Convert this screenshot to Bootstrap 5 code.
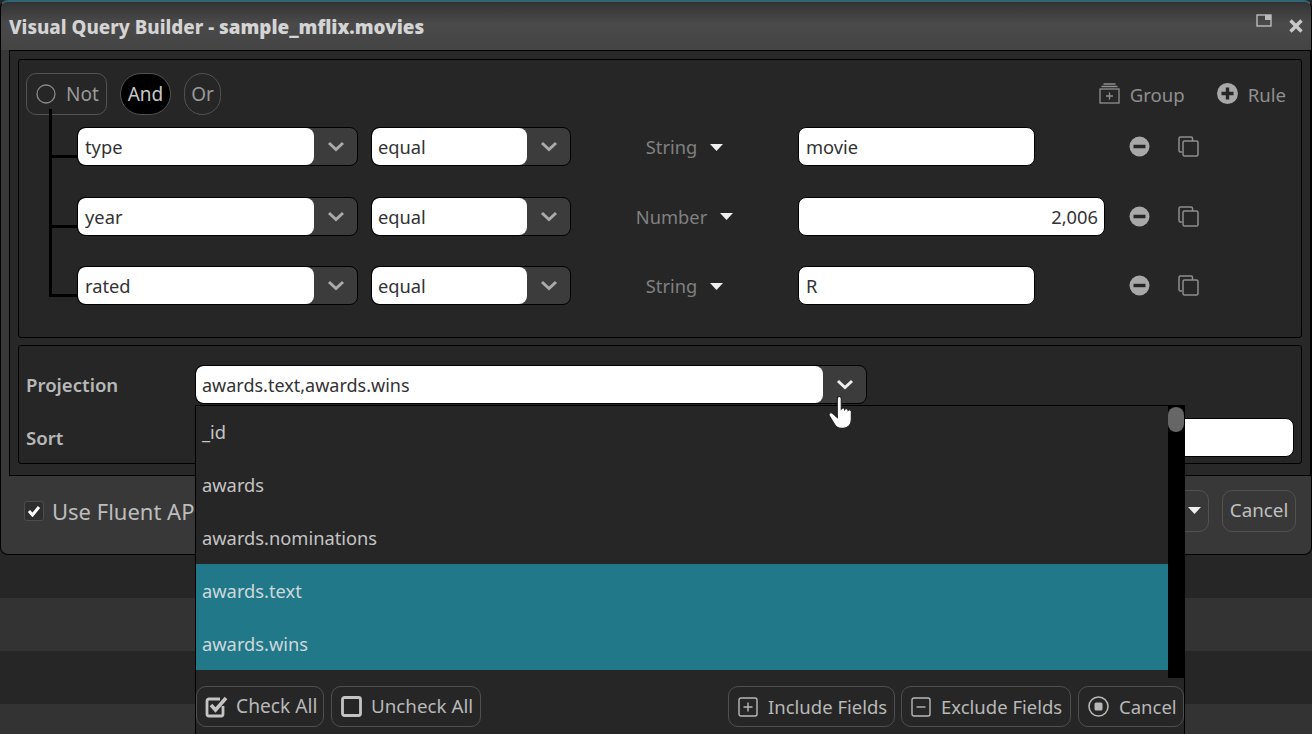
<!DOCTYPE html>
<html lang="en">
<head>
<meta charset="UTF-8">
<title>Visual Query Builder</title>
<link rel="stylesheet" href="https://cdn.jsdelivr.net/npm/bootstrap@5.3.0/dist/css/bootstrap.min.css">
<style>
html,body{height:734px;overflow:hidden}
body{background:#262626;font-family:"Noto Sans","Open Sans",sans-serif;font-size:18.3px;color:#c8c8c8;position:relative}
.stage{height:734px;overflow:hidden;position:relative}
.bgstripe{height:53px}
.bgstripe.odd{background:#333}
.bgstripe.first{height:43px}
.dlg{height:555px;background:#383838;border:1px solid #000;border-top:2px solid #2f6472;border-radius:8px;display:flex;flex-direction:column;overflow:hidden}
.dlg-head{height:48px;flex:none;padding:0 0 0 8px;background:linear-gradient(#333,#4a4a4a 45%,#444);color:#d4d4d4}
.dlg-title{font-weight:800;font-size:18.8px;margin-top:2px}
.dlg-title b{font-weight:900;font-size:18.85px}
.dlg-tools{padding-right:7px;margin-top:-5px}
.outerbox{height:426px;flex:none;margin-left:8px;border:1px solid #000;background:#282828;padding:8px 8px 9px 8px}
.panel{border:1px solid #000;border-radius:3px;background:#262626}
.panel-rules{height:279px;padding:13px 8px 13px 7px;position:relative}
.panel-proj{height:119px;margin-top:7px;padding:19px 7px 0 7px}
.btn-pill{height:42px;border:1px solid #525252;color:#9a9a9a;display:flex;align-items:center;font-size:19px;background:transparent}
.b-not{width:81px;border-radius:10px;padding-left:9px;gap:10px}
.b-and{width:51px;border-radius:21px;justify-content:center;background:#000;color:#c8c8c8;margin-left:13px}
.b-or{width:37px;border-radius:21px;justify-content:center;margin-left:13px}
.headact{color:#8f8f8f;font-size:18.6px;gap:10px;display:flex;align-items:center;margin-right:7px}
.headact span{padding-top:2px}
.headact-rule{margin-left:22px}
.rulerow{height:39px;display:flex;align-items:center;margin-left:51px;position:relative}
.rulerow+.rulerow{margin-top:30.5px}
.firstrow{margin-top:12px}
.rulerow::before{content:"";position:absolute;left:-26px;top:28px;width:26px;height:3px;background:#000}
.vline{position:absolute;left:30px;top:49px;bottom:40px;width:3px;background:#000}
.combo{height:39px;border:1px solid #000;border-radius:8px;background:#3c3c3c;display:flex;overflow:hidden;flex:none}
.combo-txt{background:#fff;color:#333;border-radius:8px;display:flex;align-items:center;padding:1px 0 0 6px;flex:1}
.combo-arr{width:43px;display:flex;align-items:center;justify-content:center;flex:none}
.c-field{width:281px}
.c-field .combo-txt{padding-left:7px}
.c-op{width:200px;margin-left:13px}
.typecol{width:227px;flex:none;display:flex;align-items:center;justify-content:center;gap:13px;color:#808080;padding-top:1px}
.valbox{height:39px;border:1px solid #000;border-radius:8px;background:#fff;color:#333;display:flex;align-items:center;padding:1px 6px 0 7px;flex:none}
.v-str{width:237px;margin-right:94px}
.v-num{width:307px;margin-right:24px;justify-content:flex-end}
.rowicons{display:flex;align-items:center;gap:28px}
.projrow{display:flex;align-items:center;height:39px}
.projlabel{width:169px;flex:none;font-weight:600;color:#b8b8b8;font-size:18.6px}
.c-proj{width:672px}
.c-proj .combo-txt{font-size:18px}
.sortrow{margin-top:14px}
.sortbox{flex:1;height:39px;background:#fff;border:1px solid #000;border-radius:8px}
.dlg-foot{flex:1;display:flex;align-items:center;padding:0 15px 9px 23px;justify-content:space-between}
.chk{width:20px;height:20px;border:1px solid #4d4d4d;border-radius:3px;background:#2e2e2e;display:flex;align-items:center;justify-content:center}
.fluent{font-size:22px;color:#bdbdbd;margin-left:8px;padding-top:2px}
.footbtn{height:42px;border:1px solid #525252;border-radius:10px;display:flex;align-items:center;justify-content:center;font-size:18.8px;color:#c0c0c0}
.f-drop{width:60px;padding-left:30px}
.f-cancel{width:74px;margin-left:13px}
.popup{position:absolute;left:195px;top:405px;width:990px;height:340px;background:#262626;border-left:1px solid #000;border-top:1px solid #000;border-right:1px solid #000;z-index:5}
.plist{height:273px;position:relative;padding-right:16px;margin-top:-1px}
.pitem{height:53px;display:flex;align-items:center;padding:1px 0 0 6px;color:#c4c4c4}
.pitem.sel{background:#207889;color:#cfd8da}
.psb{position:absolute;right:0;top:1px;bottom:0;width:16px;background:#000}
.psb-thumb{height:25px;margin-top:1px;background:#666;border-radius:8px}
.pfoot{display:flex;margin-top:8px}
.pbtn{height:41px;border:1px solid #4f4f4f;border-radius:10px;display:flex;align-items:center;gap:10px;color:#b8b8b8;padding:0 0 0 9px;white-space:nowrap;flex:none;font-size:18.5px}
.pb-check{width:128px;padding-left:8px;gap:8px;font-size:19.2px}
.pb-uncheck{width:150px;margin-left:7px;gap:9px;font-size:18.8px}
.pb-incl{width:167px;margin-left:auto}
.pb-excl{width:170px;margin-left:6px}
.pb-cancel{width:106px;margin-left:7px}
.hand{position:absolute;left:827px;top:395px;z-index:6}
</style>
</head>
<body>
<div class="stage">
  <div class="dlg">
    <div class="dlg-head d-flex justify-content-between align-items-center">
      <div class="dlg-title">Visual Query Builder - <b>sample_mflix.movies</b></div>
      <div class="dlg-tools d-flex align-items-start gap-3">
        <svg width="16" height="14" viewBox="0 0 16 14"><rect x="1" y="1" width="14" height="11" fill="none" stroke="#bbb" stroke-width="1.4"/><rect x="9" y="1" width="6" height="5" fill="#bbb"/></svg>
        <svg class="mt-1" width="16" height="16" viewBox="0 0 16 16"><path d="M2.5 2.5L13.5 13.5M13.5 2.5L2.5 13.5" stroke="#c8c8c8" stroke-width="3.4"/></svg>
      </div>
    </div>
    <div class="outerbox">
      <div class="panel panel-rules">
        <div class="vline"></div>
        <div class="d-flex align-items-center">
          <div class="btn-pill b-not">
            <svg width="20" height="20" viewBox="0 0 20 20"><circle cx="10" cy="10" r="9" fill="none" stroke="#8a8a8a" stroke-width="1.3"/></svg>
            <span>Not</span>
          </div>
          <div class="btn-pill b-and">And</div>
          <div class="btn-pill b-or">Or</div>
          <div class="headact ms-auto">
            <svg width="21" height="21" viewBox="0 0 21 21" fill="none" stroke="#8f8f8f" stroke-width="1.3"><path d="M4.5 1h12M2.5 3.5h16"/><rect x="1" y="6" width="19" height="14"/><path d="M10.5 9.5v7M7 13h7"/></svg>
            <span>Group</span>
            <svg class="headact-rule" width="21" height="21" viewBox="0 0 21 21"><circle cx="10.500" cy="10.500" r="10.500" fill="#a8a8a8"/><path d="M10.500 4.500v12M4.500 10.500h12" stroke="#262626" stroke-width="3.400"/></svg>
            <span>Rule</span>
          </div>
        </div>
        <div class="rulerow firstrow">
          <div class="combo c-field"><div class="combo-txt">type</div><div class="combo-arr"><svg width="18" height="11" viewBox="0 0 18 11"><path d="M2 2l7 6.500L16 2" fill="none" stroke="#aaa" stroke-width="3"/></svg></div></div>
          <div class="combo c-op"><div class="combo-txt">equal</div><div class="combo-arr"><svg width="18" height="11" viewBox="0 0 18 11"><path d="M2 2l7 6.500L16 2" fill="none" stroke="#aaa" stroke-width="3"/></svg></div></div>
          <div class="typecol"><span>String</span><svg width="13" height="7" viewBox="0 0 13 7"><path d="M0 0h13L6.500 7z" fill="#f0f0f0"/></svg></div>
          <div class="valbox v-str">movie</div>
          <div class="rowicons">
            <svg width="21" height="21" viewBox="0 0 21 21"><circle cx="10.500" cy="10.500" r="10" fill="#a8a8a8"/><path d="M4.500 10.500h12" stroke="#262626" stroke-width="3.400"/></svg>
            <svg width="21" height="21" viewBox="0 0 21 21" fill="none" stroke="#8f8f8f" stroke-width="1.500"><path d="M4 16H2.500a1.500 1.500 0 0 1-1.500-1.500V2.500A1.500 1.500 0 0 1 2.500 1H13a1.500 1.500 0 0 1 1.500 1.500V5"/><rect x="5" y="5" width="15" height="15" rx="1.500"/></svg>
          </div>
        </div>
        <div class="rulerow">
          <div class="combo c-field"><div class="combo-txt">year</div><div class="combo-arr"><svg width="18" height="11" viewBox="0 0 18 11"><path d="M2 2l7 6.500L16 2" fill="none" stroke="#aaa" stroke-width="3"/></svg></div></div>
          <div class="combo c-op"><div class="combo-txt">equal</div><div class="combo-arr"><svg width="18" height="11" viewBox="0 0 18 11"><path d="M2 2l7 6.500L16 2" fill="none" stroke="#aaa" stroke-width="3"/></svg></div></div>
          <div class="typecol"><span>Number</span><svg width="13" height="7" viewBox="0 0 13 7"><path d="M0 0h13L6.500 7z" fill="#f0f0f0"/></svg></div>
          <div class="valbox v-num">2,006</div>
          <div class="rowicons">
            <svg width="21" height="21" viewBox="0 0 21 21"><circle cx="10.500" cy="10.500" r="10" fill="#a8a8a8"/><path d="M4.500 10.500h12" stroke="#262626" stroke-width="3.400"/></svg>
            <svg width="21" height="21" viewBox="0 0 21 21" fill="none" stroke="#8f8f8f" stroke-width="1.500"><path d="M4 16H2.500a1.500 1.500 0 0 1-1.500-1.500V2.500A1.500 1.500 0 0 1 2.500 1H13a1.500 1.500 0 0 1 1.500 1.500V5"/><rect x="5" y="5" width="15" height="15" rx="1.500"/></svg>
          </div>
        </div>
        <div class="rulerow">
          <div class="combo c-field"><div class="combo-txt">rated</div><div class="combo-arr"><svg width="18" height="11" viewBox="0 0 18 11"><path d="M2 2l7 6.500L16 2" fill="none" stroke="#aaa" stroke-width="3"/></svg></div></div>
          <div class="combo c-op"><div class="combo-txt">equal</div><div class="combo-arr"><svg width="18" height="11" viewBox="0 0 18 11"><path d="M2 2l7 6.500L16 2" fill="none" stroke="#aaa" stroke-width="3"/></svg></div></div>
          <div class="typecol"><span>String</span><svg width="13" height="7" viewBox="0 0 13 7"><path d="M0 0h13L6.500 7z" fill="#f0f0f0"/></svg></div>
          <div class="valbox v-str">R</div>
          <div class="rowicons">
            <svg width="21" height="21" viewBox="0 0 21 21"><circle cx="10.500" cy="10.500" r="10" fill="#a8a8a8"/><path d="M4.500 10.500h12" stroke="#262626" stroke-width="3.400"/></svg>
            <svg width="21" height="21" viewBox="0 0 21 21" fill="none" stroke="#8f8f8f" stroke-width="1.500"><path d="M4 16H2.500a1.500 1.500 0 0 1-1.500-1.500V2.500A1.500 1.500 0 0 1 2.500 1H13a1.500 1.500 0 0 1 1.500 1.500V5"/><rect x="5" y="5" width="15" height="15" rx="1.500"/></svg>
          </div>
        </div>
      </div>
      <div class="panel panel-proj">
        <div class="projrow">
          <div class="projlabel">Projection</div>
          <div class="combo c-proj"><div class="combo-txt">awards.text,awards.wins</div><div class="combo-arr"><svg width="18" height="11" viewBox="0 0 18 11"><path d="M2 2l7 6.500L16 2" fill="none" stroke="#eee" stroke-width="3"/></svg></div></div>
        </div>
        <div class="projrow sortrow">
          <div class="projlabel">Sort</div>
          <div class="sortbox"></div>
        </div>
      </div>
    </div>
    <div class="dlg-foot">
      <div class="d-flex align-items-center">
        <div class="chk"><svg width="14" height="12" viewBox="0 0 14 12"><path d="M2 6l3.500 4L12 2" fill="none" stroke="#fff" stroke-width="3"/></svg></div>
        <span class="fluent">Use Fluent API</span>
      </div>
      <div class="d-flex align-items-center">
        <div class="footbtn f-drop"><svg width="13" height="7" viewBox="0 0 13 7"><path d="M0 0h13L6.500 7z" fill="#f0f0f0"/></svg></div>
        <div class="footbtn f-cancel">Cancel</div>
      </div>
    </div>
  </div>
  <div class="bgstripe first"></div>
  <div class="bgstripe odd"></div>
  <div class="bgstripe"></div>
  <div class="bgstripe odd"></div>

  <div class="popup">
    <div class="plist">
      <div class="pitem">_id</div>
      <div class="pitem">awards</div>
      <div class="pitem">awards.nominations</div>
      <div class="pitem sel">awards.text</div>
      <div class="pitem sel">awards.wins</div>
      <div class="psb"><div class="psb-thumb"></div></div>
    </div>
    <div class="pfoot">
      <div class="pbtn pb-check">
        <svg width="23" height="23" viewBox="0 0 23 23" fill="none"><path d="M18 11v8a2 2 0 0 1-2 2H4a2 2 0 0 1-2-2V6a2 2 0 0 1 2-2h11" stroke="#c4c4c4" stroke-width="2.800"/><path d="M6 10l4.500 5L21 3" stroke="#c4c4c4" stroke-width="3.600"/></svg>
        <span>Check All</span>
      </div>
      <div class="pbtn pb-uncheck">
        <svg width="21" height="21" viewBox="0 0 21 21" fill="none"><rect x="1.500" y="1.500" width="18" height="18" rx="2" stroke="#c4c4c4" stroke-width="2.800"/></svg>
        <span>Uncheck All</span>
      </div>
      <div class="pbtn pb-incl">
        <svg width="20" height="20" viewBox="0 0 20 20" fill="none" stroke="#b8b8b8" stroke-width="1.400"><rect x="1" y="1" width="18" height="18" rx="2"/><path d="M10 5.500v9M5.500 10h9"/></svg>
        <span>Include Fields</span>
      </div>
      <div class="pbtn pb-excl">
        <svg width="20" height="20" viewBox="0 0 20 20" fill="none" stroke="#b8b8b8" stroke-width="1.400"><rect x="1" y="1" width="18" height="18" rx="2"/><path d="M5.500 10h9"/></svg>
        <span>Exclude Fields</span>
      </div>
      <div class="pbtn pb-cancel">
        <svg width="21" height="21" viewBox="0 0 21 21" fill="none"><circle cx="10.500" cy="10.500" r="9.500" stroke="#b8b8b8" stroke-width="1.600"/><rect x="6.500" y="6.500" width="8" height="8" rx="1.500" fill="#b8b8b8"/></svg>
        <span>Cancel</span>
      </div>
    </div>
  </div>
  <svg class="hand" width="32" height="37" viewBox="0 0 28 32"><path d="M9 3c0-2.500 3.500-2.500 3.500 0v9c1-1.500 3-1 3 .5 .8-1.300 3-1 3 .8 1-1 2.800-.6 2.800 1.200v6.500c0 4.500-2.500 8-7 8h-2c-3 0-4.500-1.500-6-4L2 18c-1.300-2.200 1.500-3.800 3.200-2L9 19.500z" fill="#fff" stroke="#222" stroke-width="1"/></svg>
</div>
<script src="https://cdn.jsdelivr.net/npm/bootstrap@5.3.0/dist/js/bootstrap.bundle.min.js"></script>
</body>
</html>
